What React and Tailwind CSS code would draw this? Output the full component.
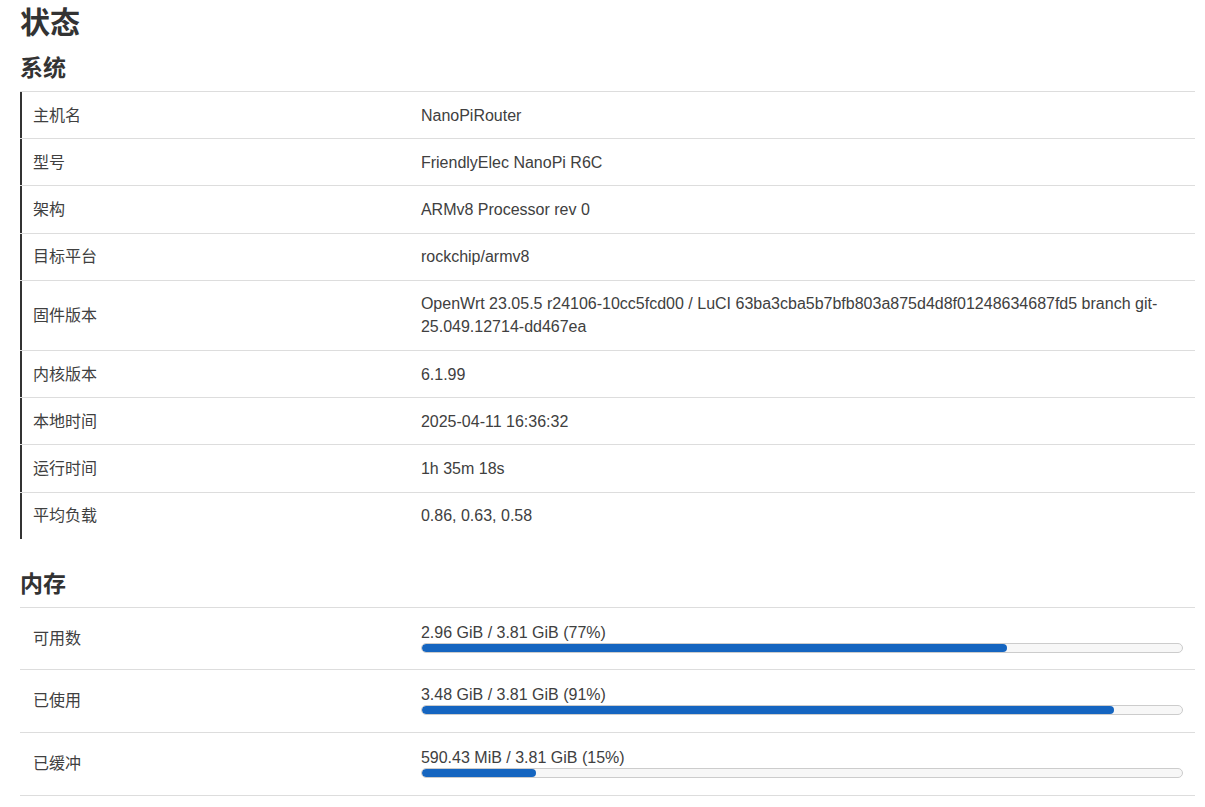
const sys = [
  ['主机名', 'NanoPiRouter'],
  ['型号', 'FriendlyElec NanoPi R6C'],
  ['架构', 'ARMv8 Processor rev 0'],
  ['目标平台', 'rockchip/armv8'],
  ['固件版本', 'OpenWrt 23.05.5 r24106-10cc5fcd00 / LuCI 63ba3cba5b7bfb803a875d4d8f01248634687fd5 branch git-25.049.12714-dd467ea'],
  ['内核版本', '6.1.99'],
  ['本地时间', '2025-04-11 16:36:32'],
  ['运行时间', '1h 35m 18s'],
  ['平均负载', '0.86, 0.63, 0.58'],
];

const mem = [
  ['可用数', '2.96 GiB / 3.81 GiB (77%)', 77],
  ['已使用', '3.48 GiB / 3.81 GiB (91%)', 91],
  ['已缓冲', '590.43 MiB / 3.81 GiB (15%)', 15],
];

export default function App() {
  return (
    <div
      className="min-h-screen bg-white pl-5 pr-[10px] text-[#404040]"
      style={{ fontFamily: '"Liberation Sans", "Noto Sans CJK SC", sans-serif' }}
    >
      <h1 className="pt-[5px] text-[30px] font-bold leading-[36px] text-[#333]">状态</h1>

      <h2 className="mt-[13px] mb-[9px] text-[23px] font-bold leading-[28px] text-[#333]">系统</h2>
      <div>
        {sys.map(([k, v]) => (
          <div key={k} className="grid grid-cols-[33.1%_1fr] border-t border-[#ddd]">
            <div className="flex items-center border-l-2 border-[#333] py-[11.6px] pl-[11px] pr-3 text-[16px] leading-[23px]">{k}</div>
            <div className="px-3 py-[11.6px] text-[16px] leading-[23px]">{v}</div>
          </div>
        ))}
      </div>

      <h2 className="mt-[31px] mb-[9px] text-[23px] font-bold leading-[28px] text-[#333]">内存</h2>
      <div className="border-b border-[#ddd]">
        {mem.map(([k, v, p]) => (
          <div key={k} className="grid grid-cols-[33.1%_1fr] border-t border-[#ddd]">
            <div className="flex items-center pl-[13px] pr-3 text-[16px]">{k}</div>
            <div className="px-3 pt-[15px] pb-[16.7px]">
              <div className="text-[16px] leading-[20px]">{v}</div>
              <div className="h-[10px] overflow-hidden rounded-[5px] border border-[#ccc] bg-[#f7f7f7]">
                <div className="h-full rounded-[4px] bg-[#1565c0]" style={{ width: `${p}%` }} />
              </div>
            </div>
          </div>
        ))}
      </div>
    </div>
  );
}
